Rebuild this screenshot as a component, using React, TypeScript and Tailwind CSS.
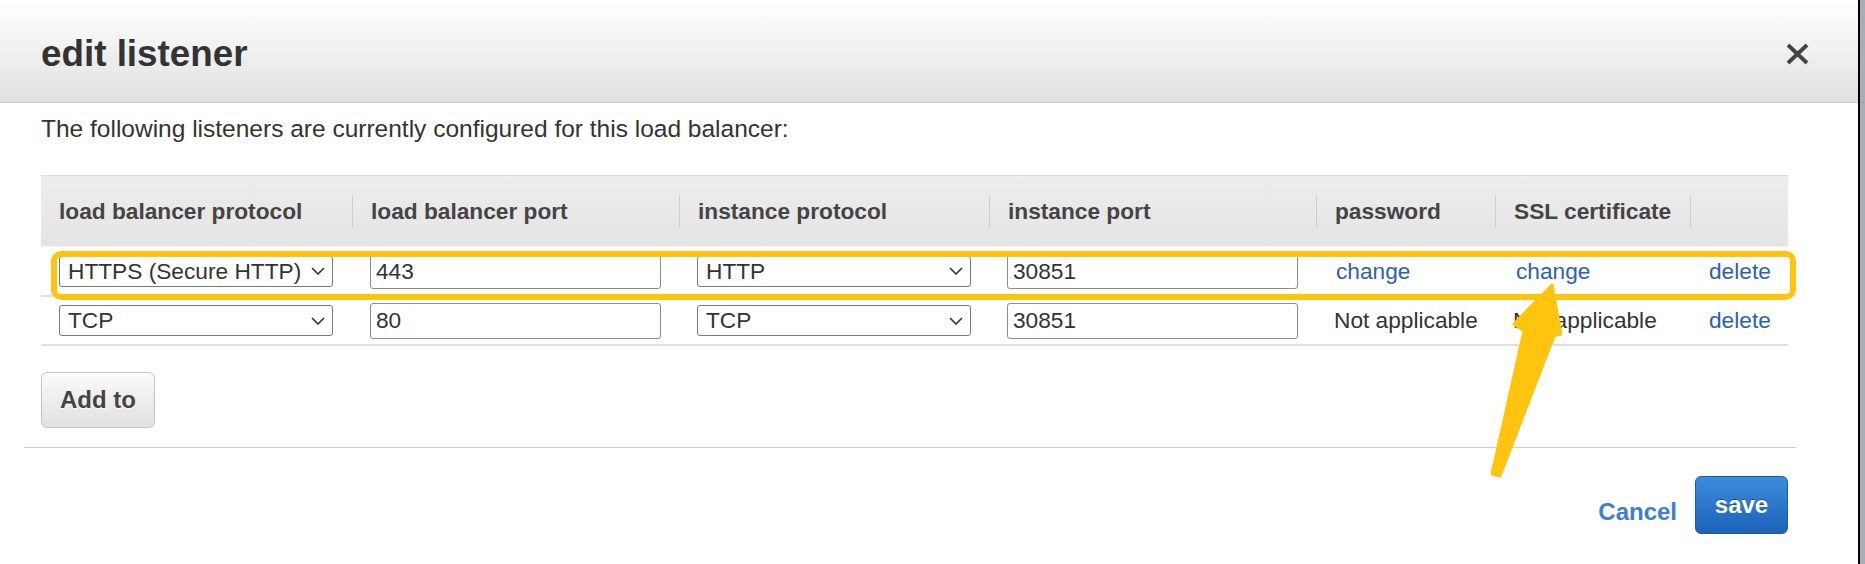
import React from "react";

const Chevron = () => (
  <svg width="14" height="8" viewBox="0 0 14 8" fill="none">
    <path d="M1 1 L7 7 L13 1" stroke="#333" strokeWidth="1.6" />
  </svg>
);

const Select = ({ value }: { value: string }) => (
  <div className="w-[274px] h-[31px] border border-[#7a7a7a] rounded-[3px] bg-white flex items-center justify-between pl-[8px] pr-[7px] text-[22.7px] text-[#333] leading-none">
    <span>{value}</span>
    <Chevron />
  </div>
);

const Input = ({ value }: { value: string }) => (
  <div className="w-[291px] h-[36px] border border-[#8c8c8c] rounded-[3px] bg-white flex items-center pl-[5px] text-[22.7px] text-[#333] leading-none">
    {value}
  </div>
);

const headers = [
  "load balancer protocol",
  "load balancer port",
  "instance protocol",
  "instance port",
  "password",
  "SSL certificate",
  "",
];

export default function App() {
  return (
    <div className="relative w-[1865px] h-[564px] overflow-hidden bg-white flex font-['Liberation_Sans',Arial,sans-serif]">
      <div className="w-[1858px] h-full flex flex-col">
        {/* header */}
        <div className="h-[103px] shrink-0 flex items-center justify-between pt-[6px] pl-[41px] pr-[49px] bg-linear-to-b from-white to-[#e1e1e1] border-b border-[#c9c9c9]">
          <h1 className="text-[36.8px] leading-[40px] font-bold text-[#333]">edit listener</h1>
          <svg width="23" height="22" viewBox="0 0 23 22" fill="none">
            <path d="M2 2 L21 20 M21 2 L2 20" stroke="#444" strokeWidth="3.8" />
          </svg>
        </div>

        {/* body */}
        <div className="ml-[24px] w-[1772px] pl-[17px] pb-[19px] border-b border-[#cccccc]">
          <p className="mt-[12px] text-[24.5px] leading-[28px] text-[#333]">
            The following listeners are currently configured for this load balancer:
          </p>

          <div className="mt-[32px] w-[1747px]">
            <div className="grid grid-cols-[311px_327px_310px_327px_179px_195px_98px] h-[72px] border-t border-[#dcdcdc] border-b border-b-[#f4f4f4] bg-linear-to-b from-[#ededed] to-[#e4e4e4]">
              {headers.map((h, i) => (
                <div key={i} className="flex items-center">
                  {i > 0 ? <div className="w-px h-[33px] bg-[#cdcdcd]" /> : null}
                  <span className="ml-[18px] text-[22.7px] font-bold text-[#444] whitespace-nowrap">
                    {h}
                  </span>
                </div>
              ))}
            </div>

            <div className="grid grid-cols-[311px_327px_310px_327px_179px_195px_98px] h-[50px] border-b-2 border-[#e0e0e0] items-center text-[22.7px]">
              <div className="pl-[18px]"><Select value="HTTPS (Secure HTTP)" /></div>
              <div className="pl-[18px]"><Input value="443" /></div>
              <div className="pl-[18px]"><Select value="HTTP" /></div>
              <div className="pl-[18px]"><Input value="30851" /></div>
              <div className="pl-[20px] text-[#2b62b0]">change</div>
              <div className="pl-[21px] text-[#2b62b0]">change</div>
              <div className="pl-[19px] text-[#2b62b0]">delete</div>
            </div>

            <div className="grid grid-cols-[311px_327px_310px_327px_179px_195px_98px] h-[49px] border-b-2 border-[#e0e0e0] items-center text-[22.7px]">
              <div className="pl-[18px]"><Select value="TCP" /></div>
              <div className="pl-[18px]"><Input value="80" /></div>
              <div className="pl-[18px]"><Select value="TCP" /></div>
              <div className="pl-[18px]"><Input value="30851" /></div>
              <div className="pl-[18px] text-[#333] whitespace-nowrap">Not applicable</div>
              <div className="pl-[18px] text-[#333] whitespace-nowrap">Not applicable</div>
              <div className="pl-[19px] text-[#2b62b0]">delete</div>
            </div>
          </div>

          <button className="mt-[26px] w-[114px] h-[56px] rounded-[6px] border border-[#c4c4c4] bg-linear-to-b from-[#fbfbfb] to-[#e1e1e1] text-[24px] font-bold text-[#444] [text-shadow:0_1px_0_#fff] flex items-center justify-center">
            Add to
          </button>
        </div>

        {/* footer */}
        <div className="mt-[28px] flex justify-end items-end gap-[18px] pr-[70px]">
          <span className="pb-[8px] text-[24px] leading-[28px] font-bold text-[#3d80c9]">Cancel</span>
          <button className="w-[93px] h-[58px] rounded-[6px] border border-[#1b5aa6] bg-linear-to-b from-[#3d8cdc] to-[#1b62b8] text-[24px] font-bold text-white [text-shadow:0_-1px_0_rgba(0,0,0,0.35)] flex items-center justify-center">
            save
          </button>
        </div>
      </div>
      <div className="w-[2px] h-full bg-black" />
      <div className="flex-1 h-full bg-[#a6aeb7]" />

      {/* annotation: highlight box */}
      <div className="absolute left-[51px] top-[251px] w-[1745px] h-[49px] border-[6px] border-[#ffc40e] rounded-[10px] pointer-events-none" />

      {/* annotation: arrow */}
      <svg className="absolute left-0 top-0 pointer-events-none" width="1865" height="564" viewBox="0 0 1865 564">
        <polygon
          points="1552,285 1561,334 1554,336 1500,476 1492,474 1524,331 1514,324"
          fill="#ffc40e"
          stroke="#ffc40e"
          strokeWidth="3"
          strokeLinejoin="round"
        />
      </svg>
    </div>
  );
}
